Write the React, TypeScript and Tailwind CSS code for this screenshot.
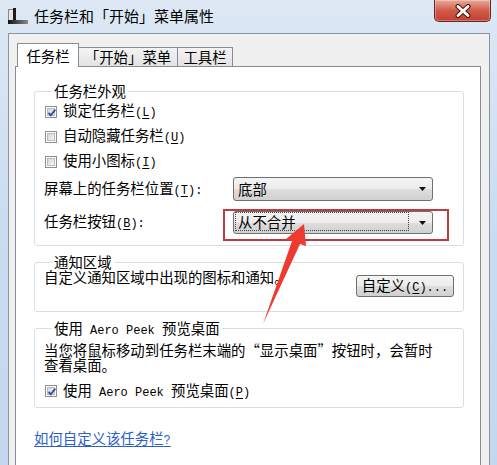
import React from "react";

function A({ children }: { children: React.ReactNode }) {
  return <span className="font-['Liberation_Mono',monospace] text-[12px]">{children}</span>;
}

function Key({ k }: { k: string }) {
  return (
    <A>
      (<span className="underline underline-offset-[2px]">{k}</span>)
    </A>
  );
}

function Check({ checked }: { checked?: boolean }) {
  return (
    <span className="relative flex w-[12px] h-[12px] shrink-0 border border-[#8f8f8f] bg-white p-[1px]">
      <span className="flex-1 border border-[#b8bcc2] bg-gradient-to-br from-[#cfd4db] to-[#f7f7f7]" />
      {checked && (
        <svg className="absolute left-0 top-0" width="12" height="12" viewBox="0 0 12 12">
          <path d="M2.5 5.8 L4.8 8.3 L9.3 2.6" fill="none" stroke="#34509a" strokeWidth="1.9" />
        </svg>
      )}
    </span>
  );
}

function Arrow() {
  return (
    <svg width="7" height="4" viewBox="0 0 7 4">
      <polygon points="0,0 7,0 3.5,4" fill="#111" />
    </svg>
  );
}

function Group({ title, children, className }: { title: React.ReactNode; children: React.ReactNode; className: string }) {
  return (
    <div className={"border border-[#d5dfe5] rounded-[3px] " + className}>
      <div className="-mt-[8px] ml-[8px] px-[2px] bg-white w-fit leading-[14px]">{title}</div>
      {children}
    </div>
  );
}

export default function App() {
  return (
    <div className="relative w-[497px] h-[465px] overflow-hidden bg-gradient-to-b from-[#dde8f4] via-[#cadcf0] to-[#c3d8ee] font-['Noto_Sans_CJK_SC',sans-serif] text-[14.4px] text-black">
      {/* title bar */}
      <div className="h-[33px] flex items-start">
        <div className="flex items-center h-[32px] pl-[8px] gap-[6px]">
          <svg width="20" height="16" viewBox="0 0 20 16">
            <rect x="0.5" y="1.5" width="5" height="11" fill="#e4e4e4" stroke="#8a8a8a" />
            <rect x="5" y="0" width="3" height="14" fill="#1d1d1d" />
            <defs>
              <linearGradient id="tb" x1="0" x2="1" y1="0" y2="0">
                <stop offset="0" stopColor="#111" />
                <stop offset="1" stopColor="#8a8a8a" />
              </linearGradient>
            </defs>
            <rect x="0" y="12" width="20" height="4" fill="url(#tb)" />
          </svg>
          <span className="text-[15px] leading-[20px] text-black">任务栏和「开始」菜单属性</span>
        </div>
        <div className="ml-auto mr-[6px] w-[57px] h-[22px] rounded-b-[5px] border border-t-0 border-[#5e2a23] bg-gradient-to-b from-[#e8aa9a] via-[#d05a48] to-[#c4402f] flex items-center justify-center shadow-[inset_0_0_0_1px_rgba(255,255,255,0.3)]">
          <svg width="18" height="14" viewBox="0 0 18 14">
            <path d="M4 2.5 L14 11.5 M14 2.5 L4 11.5" stroke="#4a1a14" strokeWidth="5" strokeLinecap="round" />
            <path d="M4 2.5 L14 11.5 M14 2.5 L4 11.5" stroke="#ffffff" strokeWidth="2.8" strokeLinecap="round" />
          </svg>
        </div>
      </div>

      {/* client area */}
      <div className="ml-[8px] w-[482px] h-[460px] border border-[#8795a5] bg-[#f0f0f0] pt-[9px]">
        {/* tabs */}
        <div className="flex items-end ml-[8px] h-[23px]">
          <div className="relative z-10 w-[62px] h-[24px] -mb-[1px] border border-b-0 border-[#898c95] bg-white flex items-center justify-center leading-[18px]">
            任务栏
          </div>
          <div className="w-[99px] h-[19px] border-t border-r border-[#898c95] bg-gradient-to-b from-[#f4f4f4] to-[#e3e3e3] flex items-center justify-center leading-[18px]">
            「开始」菜单
          </div>
          <div className="w-[55px] h-[19px] border-t border-r border-[#898c95] bg-gradient-to-b from-[#f4f4f4] to-[#e3e3e3] flex items-center justify-center leading-[18px]">
            工具栏
          </div>
        </div>

        {/* panel */}
        <div className="ml-[6px] w-[466px] h-[420px] border border-[#898c95] bg-white pl-[18px] pt-[24px]">
          <Group title="任务栏外观" className="w-[430px] pl-[9px] pb-[11px]">
            <div className="pt-[1px]">
              <div className="flex items-center h-[25px]">
                <span className="ml-[1px]"><Check checked /></span>
                <span className="ml-[6px] leading-[18px]">锁定任务栏<Key k="L" /></span>
              </div>
              <div className="flex items-center h-[25px]">
                <span className="ml-[1px]"><Check /></span>
                <span className="ml-[6px] leading-[18px]">自动隐藏任务栏<Key k="U" /></span>
              </div>
              <div className="flex items-center h-[25px]">
                <span className="ml-[1px]"><Check /></span>
                <span className="ml-[6px] leading-[18px]">使用小图标<Key k="I" /></span>
              </div>
            </div>
            <div className="flex items-center mt-[3px] h-[24px]">
              <span className="w-[189px] leading-[18px]">屏幕上的任务栏位置<Key k="T" /><A>:</A></span>
              <div className="w-[200px] h-[24px] border border-[#707070] rounded-[3px] bg-[linear-gradient(#f4f4f4_0%,#ececec_50%,#dedede_50%,#d0d0d0_100%)] flex items-center justify-between pl-[4px] pr-[6px]">
                <span className="leading-[18px]">底部</span>
                <Arrow />
              </div>
            </div>
            <div className="flex items-center mt-[10px] h-[23px]">
              <span className="w-[189px] leading-[18px]">任务栏按钮<Key k="B" /><A>:</A></span>
              <div className="relative w-[200px] h-[23px] border border-[#707070] rounded-[3px] bg-[linear-gradient(#f4f4f4_0%,#ececec_50%,#dedede_50%,#d0d0d0_100%)] flex items-start justify-between pr-[6px]">
                <div className="ml-[1px] w-[174px] h-[19px] border border-dotted border-[#444] flex items-center pl-[2px]">
                  <span className="leading-[17px]">从不合并</span>
                </div>
                <span className="self-center"><Arrow /></span>
                <div className="absolute -left-[11px] -top-[3px] -right-[17px] -bottom-[8px] border-2 border-[#c13a3e]" />
              </div>
            </div>
          </Group>

          <Group title="通知区域" className="mt-[16px] w-[430px] pl-[9px] pr-[9px] pb-[14px]">
            <div className="pt-[1px] flex justify-between items-start">
              <span className="leading-[14px]">自定义通知区域中出现的图标和通知。</span>
              <div className="mt-[5px] w-[98px] h-[22px] border border-[#707070] rounded-[3px] bg-[linear-gradient(#f4f4f4_0%,#ececec_50%,#dedede_50%,#d0d0d0_100%)] flex items-center justify-center">
                <span className="leading-[18px]">自定义<Key k="C" /><A>...</A></span>
              </div>
            </div>
          </Group>

          <Group
            title={
              <span>
                使用<A> Aero Peek </A>预览桌面
              </span>
            }
            className="mt-[16px] w-[430px] pl-[9px] pb-[4px]"
          >
            <div className="mt-[4px] leading-[15px]">
              当您将鼠标移动到任务栏末端的“显示桌面”按钮时，会暂时
              <br />
              查看桌面。
            </div>
            <div className="flex items-center mt-[7px] h-[24px]">
              <span className="ml-[1px]"><Check checked /></span>
              <span className="ml-[6px] leading-[18px]">
                使用<A> Aero Peek </A>预览桌面<Key k="P" />
              </span>
            </div>
          </Group>

          <div className="mt-[22px] leading-[16px] text-[#2a62c8] underline underline-offset-[2px] w-fit">
            如何自定义该任务栏<A>?</A>
          </div>
        </div>
      </div>

      {/* red annotation arrow */}
      <svg className="absolute left-0 top-0 pointer-events-none" width="497" height="465" viewBox="0 0 497 465">
        <polygon points="304,224 286,239 292,241 263,324 300,244 306,246" fill="#ee3a31" />
      </svg>
    </div>
  );
}
